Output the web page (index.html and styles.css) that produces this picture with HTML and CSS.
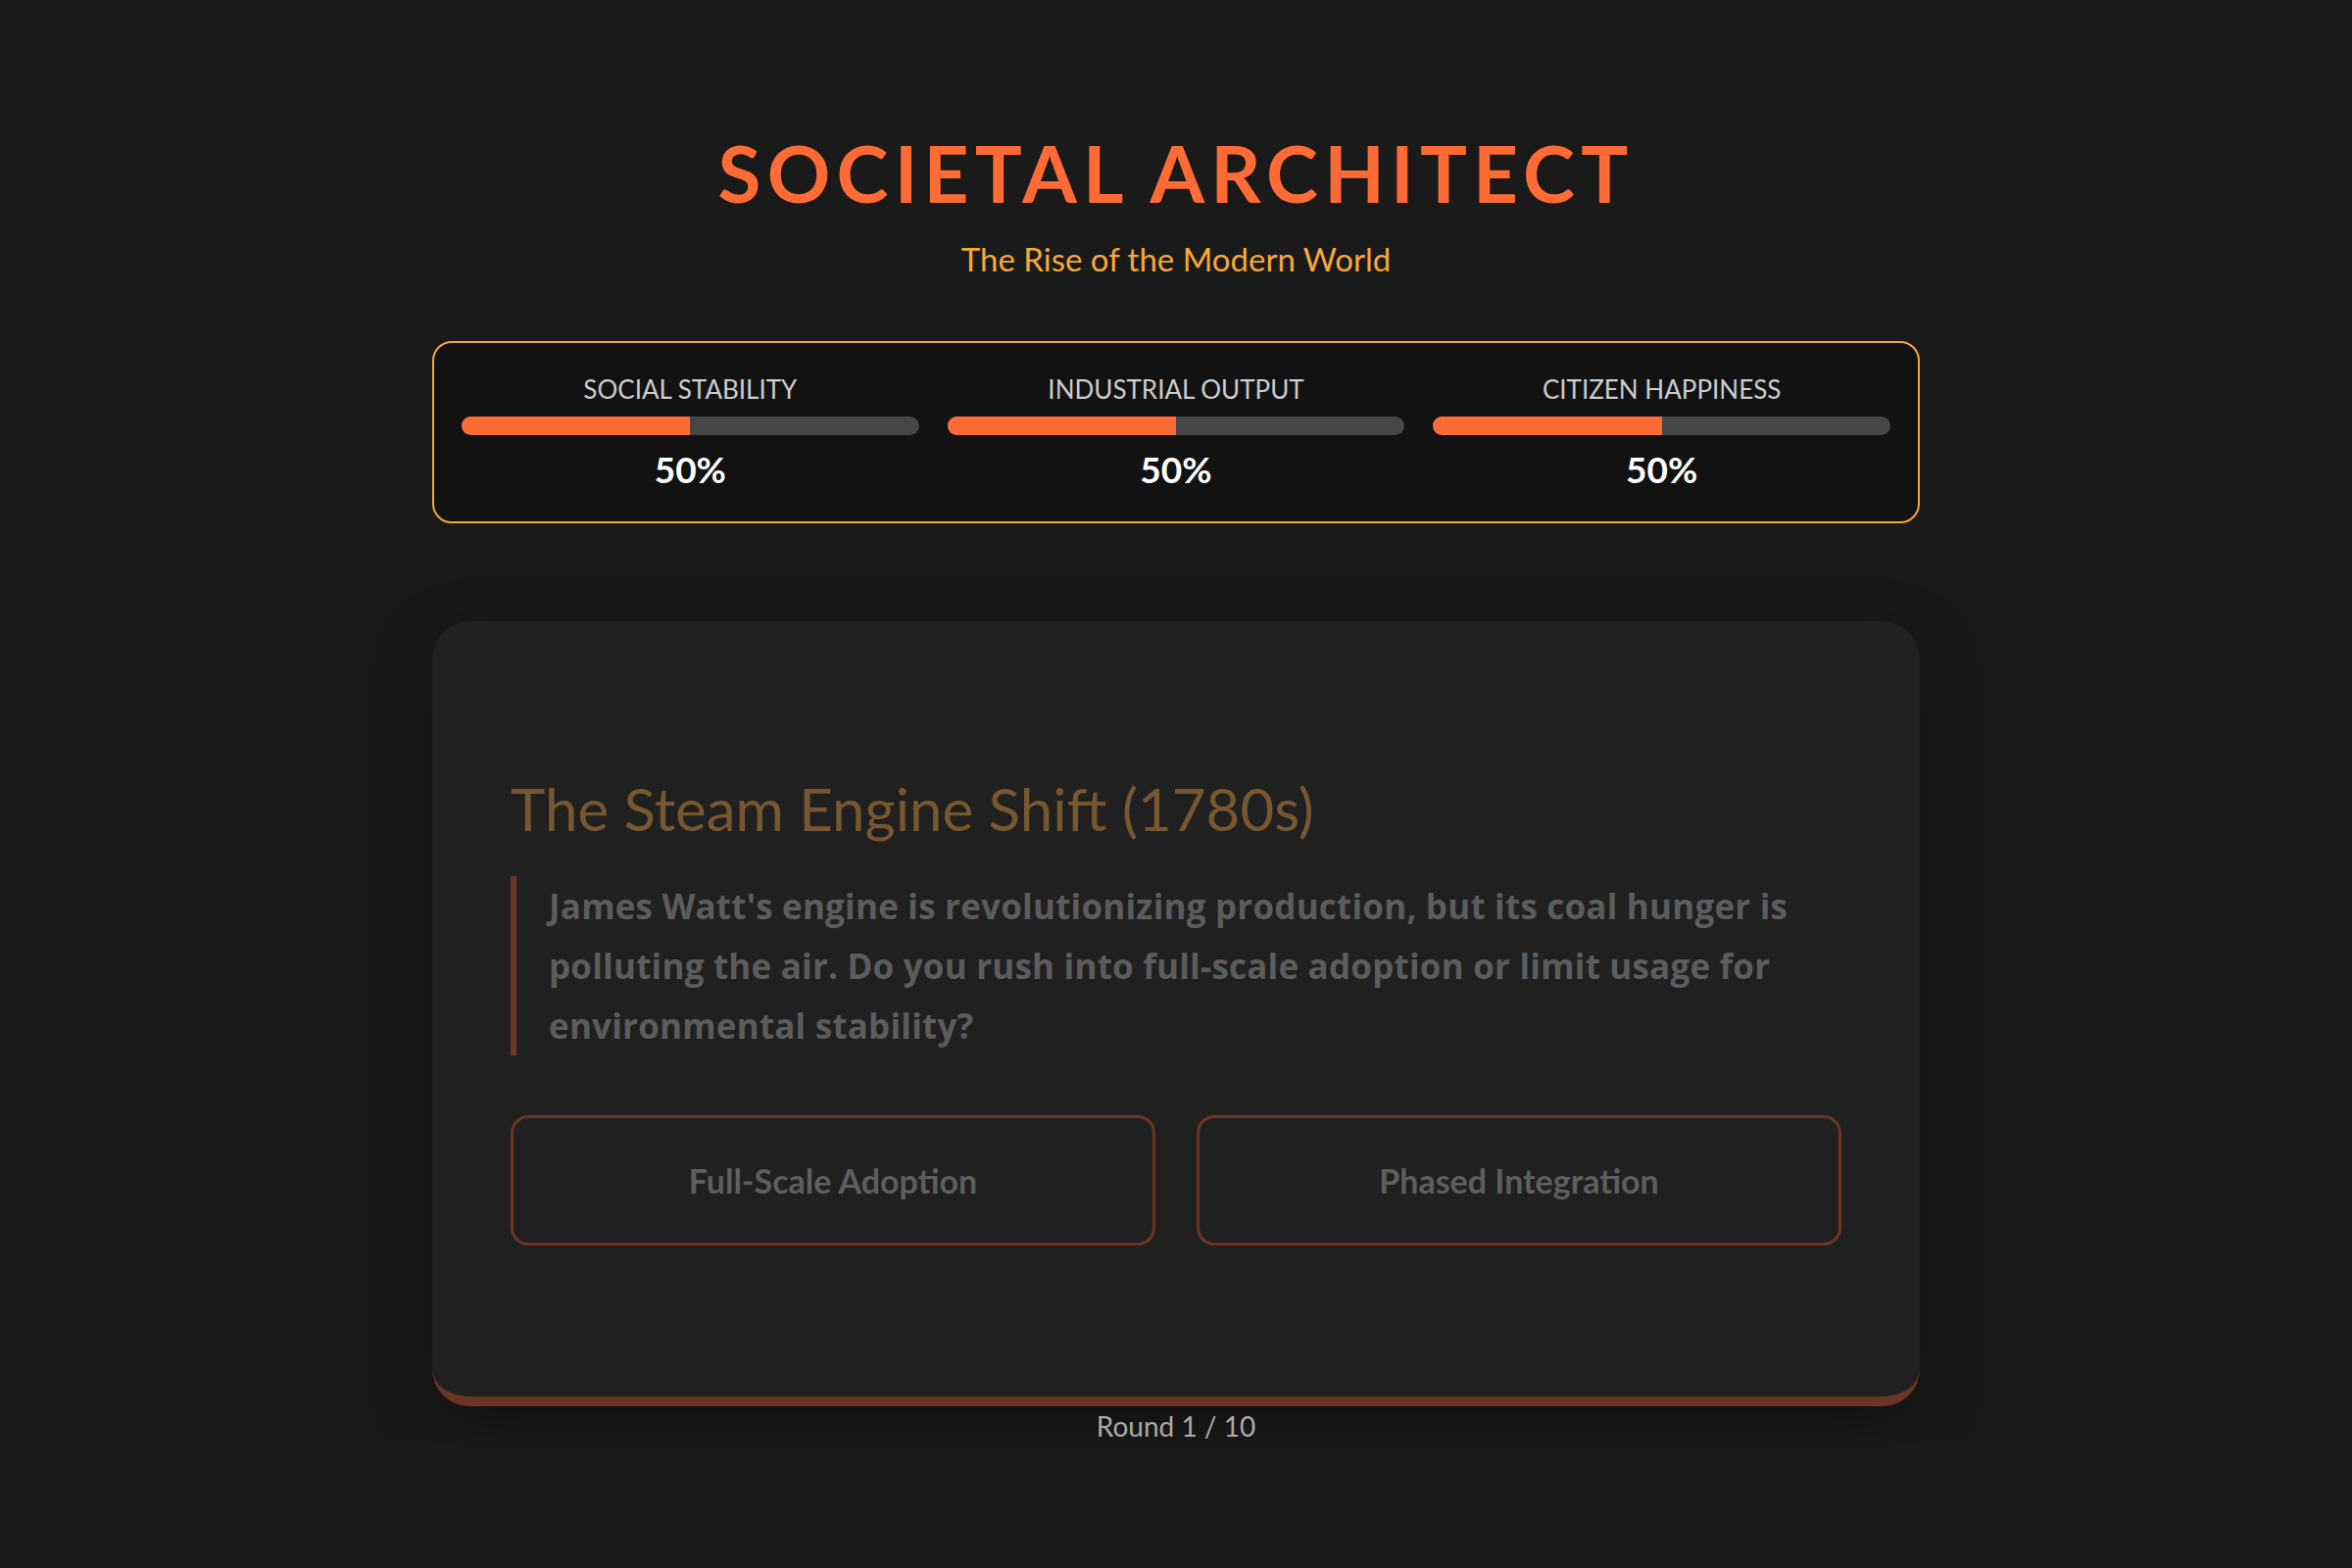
FILE: index.html
```html
<!DOCTYPE html>
<html lang="en">
<head>
  <meta charset="UTF-8">
  <title>Societal Architect</title>
  <link rel="stylesheet" href="styles.css">
</head>
<body>
  <div class="game-container">
    <header class="game-header">
      <h1>Societal Architect</h1>
      <p class="subtitle">The Rise of the Modern World</p>
    </header>

    <div class="stats-panel">
      <div class="stat">
        <div class="stat-label">Social Stability</div>
        <div class="stat-bar"><div class="stat-fill" style="width:50%"></div></div>
        <div class="stat-value">50%</div>
      </div>
      <div class="stat">
        <div class="stat-label">Industrial Output</div>
        <div class="stat-bar"><div class="stat-fill" style="width:50%"></div></div>
        <div class="stat-value">50%</div>
      </div>
      <div class="stat">
        <div class="stat-label">Citizen Happiness</div>
        <div class="stat-bar"><div class="stat-fill" style="width:50%"></div></div>
        <div class="stat-value">50%</div>
      </div>
    </div>

    <div class="scenario-card">
      <h2 class="scenario-title">The Steam Engine Shift (1780s)</h2>
      <p class="scenario-text">James Watt's engine is revolutionizing production, but its coal hunger is polluting the air. Do you rush into full-scale adoption or limit usage for environmental stability?</p>
      <div class="choices">
        <button class="choice-btn">Full-Scale Adoption</button>
        <button class="choice-btn">Phased Integration</button>
      </div>
    </div>

    <div class="round-info">Round 1 / 10</div>
  </div>
</body>
</html>
```

FILE: styles.css
```css
body {
  background: #1a1a1a;
  font-family: "Lato", "Open Sans", sans-serif;
  margin: 0;
  color: #ccc;
}
.game-container {
  max-width: 1518px;
  margin: 0 auto;
  padding-top: 128px;
}
.game-header { text-align: center; }
.game-header h1 {
  margin: 0;
  font-size: 80px;
  line-height: 96px;
  font-weight: 700;
  letter-spacing: 6.2px;
  text-transform: uppercase;
  color: #ff6b35;
}
.subtitle {
  margin: 20px 0 0;
  font-size: 33px;
  line-height: 40px;
  color: #f7a838;
}
.stats-panel {
  margin-top: 64px;
  background: #121212;
  border: 2px solid #f4a63a;
  border-radius: 20px;
  padding: 32px 28px 32px;
  display: grid;
  grid-template-columns: repeat(3, 1fr);
  gap: 29px;
}
.stat { text-align: center; }
.stat-label {
  font-size: 26px;
  line-height: 31px;
  color: #ccc;
  text-transform: uppercase;
}
.stat-bar {
  height: 19px;
  margin: 12px 0 14px;
  background: #474747;
  border-radius: 10px;
  overflow: hidden;
}
.stat-fill { height: 100%; background: #ff6b35; }
.stat-value {
  font-size: 37px;
  line-height: 42px;
  font-weight: 700;
  color: #fff;
}
.scenario-card {
  margin-top: 100px;
  background: #202020;
  border-radius: 38px;
  border-bottom: 10px solid #6b3525;
  padding: 156px 80px 154px;
  box-shadow: 0 20px 60px rgba(0, 0, 0, 0.35);
}
.scenario-title {
  margin: 0 0 34px;
  font-size: 60px;
  line-height: 70px;
  font-weight: 400;
  color: #77572f;
}
.scenario-text {
  margin: 0;
  border-left: 6px solid #6e3524;
  padding-left: 33px;
  font-family: "Open Sans", sans-serif;
  font-size: 35px;
  line-height: 61px;
  font-weight: 700;
  letter-spacing: 0.2px;
  color: #5c5c5c;
}
.choices {
  margin-top: 61px;
  display: grid;
  grid-template-columns: 1fr 1fr;
  gap: 42px;
}
.choice-btn {
  height: 133px;
  background: transparent;
  border: 3px solid #6e3524;
  border-radius: 18px;
  font-family: inherit;
  font-size: 34px;
  font-weight: 700;
  color: #5e5e5e;
  cursor: pointer;
}
.round-info {
  margin-top: 4px;
  text-align: center;
  font-size: 28px;
  line-height: 32px;
  color: #aaa;
}
```
